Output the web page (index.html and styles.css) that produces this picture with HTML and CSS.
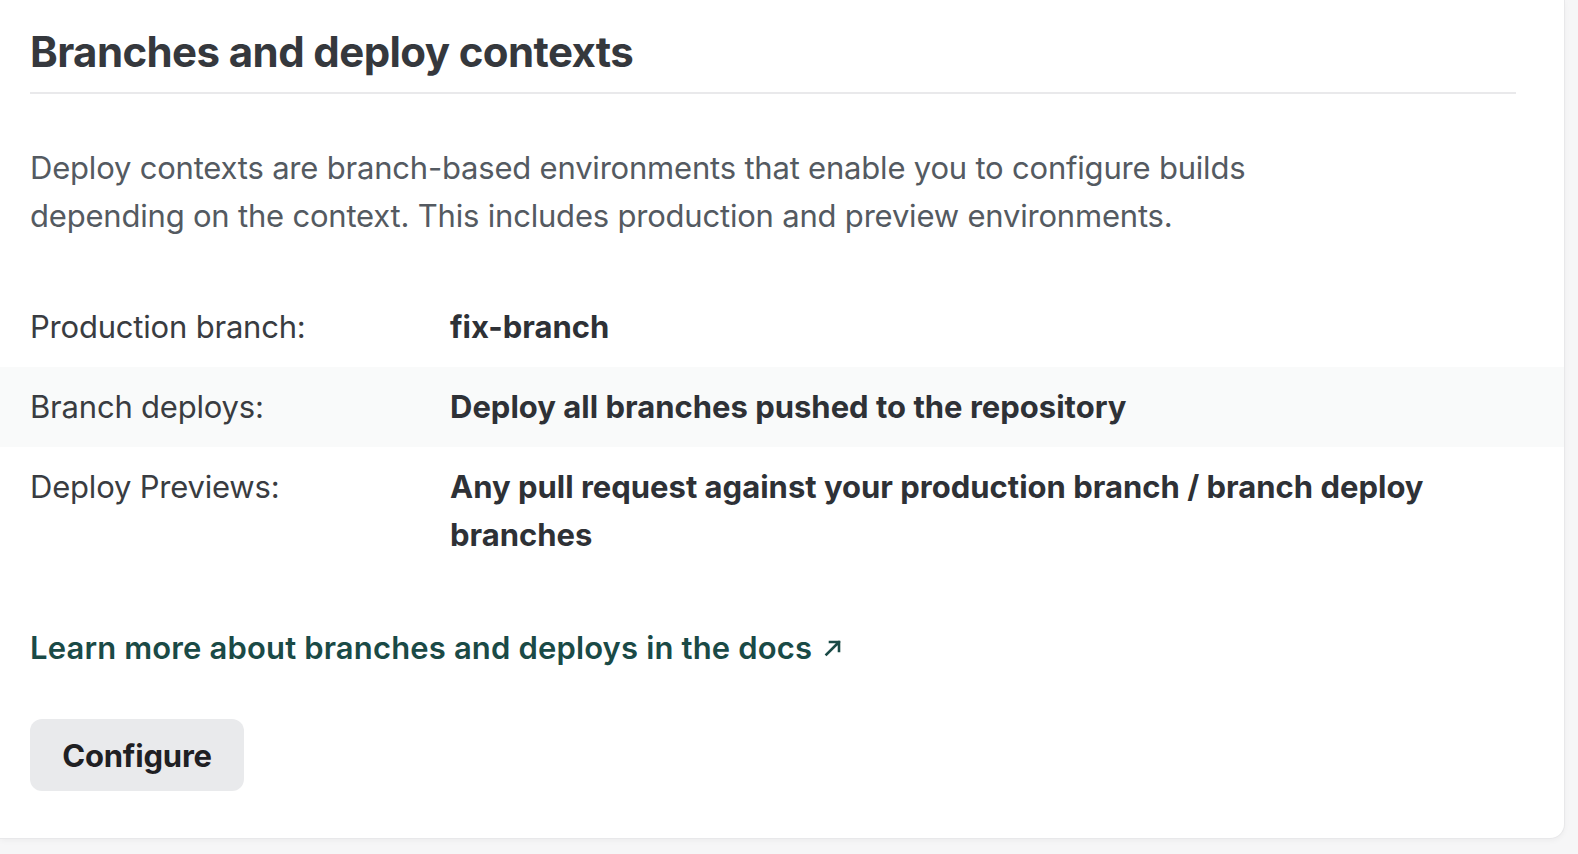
FILE: index.html
```html
<!DOCTYPE html>
<html lang="en">
<head>
<meta charset="utf-8">
<title>Branches and deploy contexts</title>
<link rel="stylesheet" href="styles.css">
</head>
<body>
<section class="card">
  <div class="card-inner">
    <h2 class="title">Branches and deploy contexts</h2>
    <p class="intro">Deploy contexts are branch-based environments that enable you to configure builds depending on the context. This includes production and preview environments.</p>
  </div>
  <dl class="settings">
    <div class="row">
      <dt class="label">Production branch:</dt>
      <dd class="value">fix-branch</dd>
    </div>
    <div class="row row-alt">
      <dt class="label">Branch deploys:</dt>
      <dd class="value">Deploy all branches pushed to the repository</dd>
    </div>
    <div class="row">
      <dt class="label">Deploy Previews:</dt>
      <dd class="value">Any pull request against your production branch / branch deploy branches</dd>
    </div>
  </dl>
  <div class="card-inner footer">
    <a class="docs-link" href="#">Learn more about branches and deploys in the docs<svg class="ext" viewBox="0 0 20 20" width="20" height="20" aria-hidden="true"><path d="M3.5 16.5 L16 4 M7 4 H16 V13" fill="none" stroke="currentColor" stroke-width="2.6" stroke-linecap="square"/></svg></a>
    <div class="actions">
      <button class="btn" type="button">Configure</button>
    </div>
  </div>
</section>
</body>
</html>
```
FILE: styles.css
```css
html, body {
  margin: 0;
  padding: 0;
}
body {
  background: #f6f6f7;
  font-family: Inter, "Noto Sans", "Liberation Sans", sans-serif;
  width: 1578px;
  height: 854px;
  overflow: hidden;
}
.card {
  width: 1564px;
  background: #ffffff;
  border-bottom-right-radius: 14px;
  box-shadow: 0 0 0 1px #e8e8ea, 0 2px 6px rgba(0, 0, 0, 0.05);
  padding-bottom: 47px;
}
.card-inner {
  padding: 0 48px 0 30px;
}
.title {
  margin: 0;
  padding: 28px 0 16px;
  font-size: 42px;
  line-height: 48px;
  font-weight: 700;
  letter-spacing: -0.6px;
  color: #35383d;
  border-bottom: 2px solid #e9e9eb;
}
.intro {
  margin: 50px 0 0;
  max-width: 1260px;
  font-size: 31px;
  line-height: 48px;
  color: #545a61;
  letter-spacing: -0.2px;
}
.settings {
  margin: 47px 0 0;
}
.row {
  display: grid;
  grid-template-columns: 420px 1fr;
  padding: 16px 48px 16px 30px;
}
.row-alt {
  background: #f9fafa;
}
.label, .value {
  margin: 0;
  font-size: 31px;
  line-height: 48px;
  letter-spacing: -0.2px;
}
.label {
  color: #393c41;
}
.value {
  font-weight: 700;
  color: #2e3136;
  letter-spacing: 0;
  padding-right: 60px;
}
.footer {
  padding-top: 49px;
}
.docs-link {
  display: inline-flex;
  align-items: center;
  gap: 11px;
  font-size: 31px;
  line-height: 48px;
  font-weight: 600;
  letter-spacing: 0.15px;
  color: #1a4a46;
  text-decoration: none;
}
.ext {
  display: block;
  margin-top: -1px;
}
.actions {
  margin-top: 47px;
}
.btn {
  display: block;
  width: 214px;
  height: 72px;
  border: 0;
  border-radius: 12px;
  background: #e9eaec;
  color: #1f2023;
  font-family: Inter, "Noto Sans", "Liberation Sans", sans-serif;
  font-size: 31px;
  font-weight: 700;
  letter-spacing: -0.2px;
  cursor: pointer;
}
```
